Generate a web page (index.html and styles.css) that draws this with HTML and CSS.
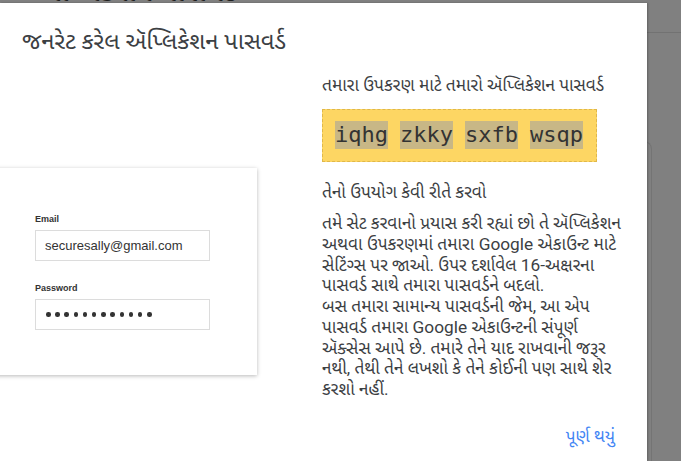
FILE: index.html
```html
<!DOCTYPE html>
<html lang="gu">
<head>
<meta charset="utf-8">
<title>ઍપ્લિકેશન પાસવર્ડ</title>
<link rel="stylesheet" href="styles.css">
</head>
<body>
<div class="page">
  <div class="page-header"><span class="page-header-text">ઍપ્લિકેશન પાસવર્ડ</span></div>
  <div class="page-card"></div>
</div>

<div class="dialog" role="dialog">
  <h1 class="dialog-title">જનરેટ કરેલ ઍપ્લિકેશન પાસવર્ડ</h1>
  <div class="dialog-body">
    <div class="illustration">
      <div class="login-card">
        <div class="login-label">Email</div>
        <div class="login-input">securesally@gmail.com</div>
        <div class="login-label login-label-second">Password</div>
        <div class="login-input login-dots">
          <span class="dot"></span><span class="dot"></span><span class="dot"></span><span class="dot"></span><span class="dot"></span><span class="dot"></span><span class="dot"></span><span class="dot"></span><span class="dot"></span><span class="dot"></span><span class="dot"></span><span class="dot"></span>
        </div>
      </div>
    </div>
    <div class="info">
      <p class="info-lead">તમારા ઉપકરણ માટે તમારો ઍપ્લિકેશન પાસવર્ડ</p>
      <div class="password-box">
        <span class="pw-word">iqhg</span><span class="pw-word">zkky</span><span class="pw-word">sxfb</span><span class="pw-word">wsqp</span>
      </div>
      <p class="info-heading">તેનો ઉપયોગ કેવી રીતે કરવો</p>
      <p class="info-text">તમે સેટ કરવાનો પ્રયાસ કરી રહ્યાં છો તે ઍપ્લિકેશન અથવા ઉપકરણમાં તમારા Google એકાઉન્ટ માટે સેટિંગ્સ પર જાઓ. ઉપર દર્શાવેલ 16-અક્ષરના પાસવર્ડ સાથે તમારા પાસવર્ડને બદલો.<br>બસ તમારા સામાન્ય પાસવર્ડની જેમ, આ એપ પાસવર્ડ તમારા Google એકાઉન્ટની સંપૂર્ણ ઍક્સેસ આપે છે. તમારે તેને યાદ રાખવાની જરૂર નથી, તેથી તેને લખશો કે તેને કોઈની પણ સાથે શેર કરશો નહીં.</p>
    </div>
  </div>
  <div class="dialog-footer">
    <button class="done-btn" type="button">પૂર્ણ થયું</button>
  </div>
</div>
</body>
</html>
```
FILE: styles.css
```css
html, body {
  margin: 0;
  padding: 0;
}
body {
  width: 681px;
  height: 461px;
  overflow: hidden;
  position: relative;
  background: #808080;
  font-family: Roboto, "Noto Sans Gujarati", "Noto Sans", sans-serif;
  color: #3c4043;
}

/* page behind the scrim */
.page-header {
  height: 33px;
  border-bottom: 1px solid #727272;
  overflow: hidden;
  box-sizing: border-box;
}
.page-header-text {
  display: block;
  margin-top: -24px;
  margin-left: 34px;
  font-size: 30px;
  line-height: 30px;
  color: #1e1e1e;
}
.page-card {
  margin-top: 108px;
  width: 652px;
  height: 320px;
  box-sizing: border-box;
  border: 1px solid #747474;
  border-left: none;
  border-bottom: none;
  border-radius: 0 8px 0 0;
}

/* dialog */
.dialog {
  position: absolute;
  left: 0;
  top: 3px;
  bottom: 0;
  width: 647px;
  background: #fff;
  box-shadow: 1px 0 2px rgba(0, 0, 0, 0.25);
  overflow: hidden;
}
.dialog-title {
  margin: 0;
  padding: 22px 22px 0;
  font-size: 23.7px;
  line-height: 32px;
  font-weight: 400;
  color: #3c4043;
}
.dialog-body {
  display: flex;
  margin-top: 18px;
}
.illustration {
  width: 322px;
  flex: none;
}
.login-card {
  margin-left: -20px;
  margin-top: 93px;
  width: 277px;
  height: 207px;
  box-sizing: border-box;
  padding: 44px 0 0 55px;
  background: #fff;
  box-shadow: 0 1px 4px rgba(0, 0, 0, 0.28);
  font-family: "Liberation Sans", Arial, sans-serif;
}
.login-label {
  font-size: 9px;
  line-height: 14px;
  font-weight: 700;
  color: #333;
  margin-bottom: 4px;
}
.login-label-second {
  margin-top: 20px;
}
.login-input {
  width: 175px;
  height: 31px;
  box-sizing: border-box;
  border: 1px solid #dcdcdc;
  padding: 0 9px;
  font-size: 13px;
  line-height: 29px;
  color: #333;
}
.login-dots {
  display: flex;
  align-items: center;
  gap: 4.7px;
  padding-left: 10px;
}
.dot {
  width: 4.5px;
  height: 4.5px;
  border-radius: 50%;
  background: #333;
}

.info {
  width: 302px;
  flex: none;
}
.info-lead {
  margin: 0;
  font-size: 17.3px;
  line-height: 20px;
}
.password-box {
  display: inline-block;
  margin-top: 14px;
  padding: 11px 1px 12px 12px;
  background: #fdd663;
  border: 1px dashed #e0b84a;
  font-family: "DejaVu Sans Mono", "Liberation Mono", monospace;
  font-size: 22px;
  line-height: 28px;
  color: #333;
  white-space: nowrap;
}
.pw-word {
  display: inline-block;
  background: #c8b786;
  margin-right: 12px;
}
.info-heading {
  margin: 20px 0 0;
  font-size: 17.3px;
  line-height: 20px;
}
.info-text {
  margin: 11px 0 0;
  font-size: 17.3px;
  line-height: 20.75px;
}

.dialog-footer {
  display: flex;
  justify-content: flex-end;
  padding: 0 24px 0 0;
  margin-top: 19px;
}
.done-btn {
  border: none;
  background: none;
  padding: 6px 8px;
  font-family: Roboto, "Noto Sans Gujarati", "Noto Sans", sans-serif;
  font-size: 17.3px;
  line-height: 22px;
  color: #4285f4;
  cursor: pointer;
}
```
